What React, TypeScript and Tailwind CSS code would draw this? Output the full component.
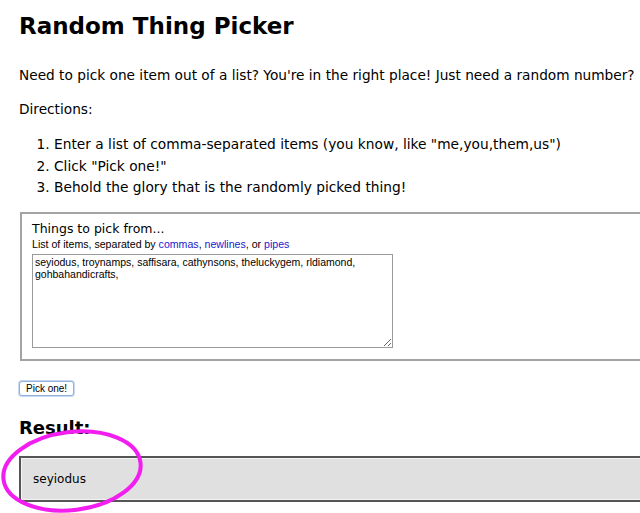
import React from "react"

const items = "seyiodus, troynamps, saffisara, cathynsons, theluckygem, rldiamond,\ngohbahandicrafts,"

export default function App() {
  return (
    <div className="relative w-[640px] h-[513px] overflow-hidden bg-white text-black">
      <div className="w-[760px] pl-[19px] pt-[11px] font-['DejaVu_Sans',sans-serif]">
        <h1 className="text-[23px] font-bold leading-[30px]">Random Thing Picker</h1>

        <p className="mt-[25px] text-[13.7px] leading-[18px]">
          Need to pick one item out of a list? You're in the right place! Just need a random number?
        </p>

        <p className="mt-[16px] text-[13.7px] leading-[18px]">Directions:</p>

        <ol className="mt-[16px] pl-[35px] list-decimal text-[13.75px] leading-[21.5px]">
          <li>Enter a list of comma-separated items (you know, like "me,you,them,us")</li>
          <li>Click "Pick one!"</li>
          <li>Behold the glory that is the randomly picked thing!</li>
        </ol>

        <div className="mt-[13px] ml-px w-[700px] border-2 border-[#a3a3a3] pl-[10px] pt-[7px] pb-[11px]">
          <div className="text-[12.5px] leading-[16px]">Things to pick from...</div>
          <div className="font-['Liberation_Sans',sans-serif] text-[10.6px] leading-[14px]">
            List of items, separated by <span className="text-[#2020d0]">commas</span>,{" "}
            <span className="text-[#2020d0]">newlines</span>, or <span className="text-[#2020d0]">pipes</span>
          </div>
          <textarea
            readOnly
            value={items}
            className="mt-[3px] block w-[361px] h-[94px] resize-y border border-[#9a9a9a] px-[2px] py-[1px] font-['Liberation_Sans',sans-serif] text-[10.5px] leading-[12px] text-black outline-none"
          />
        </div>

        <button className="mt-[20px] h-[15px] px-[6px] rounded-[3px] border border-[#8fb1dc] bg-white font-['Liberation_Sans',sans-serif] text-[10px] leading-[13px] shadow-[0_0_0_1px_#c6d9f1]">
          Pick one!
        </button>

        <h2 className="mt-[18px] text-[18px] font-bold leading-[22px]">Result:</h2>

        <div className="mt-[17px] h-[46px] border-2 border-[#555] bg-[#e0e0e0] pl-[12px] flex items-center text-[12px] shadow-[inset_0_0_0_1px_#f4f4f4]">
          seyiodus
        </div>
      </div>

      <svg className="absolute left-0 top-[427px] pointer-events-none" width="150" height="86" viewBox="0 0 150 86">
        <ellipse cx="72" cy="44" rx="69" ry="39" fill="none" stroke="#f21ef0" strokeWidth="4" transform="rotate(-7 72 44)" />
      </svg>
    </div>
  )
}
